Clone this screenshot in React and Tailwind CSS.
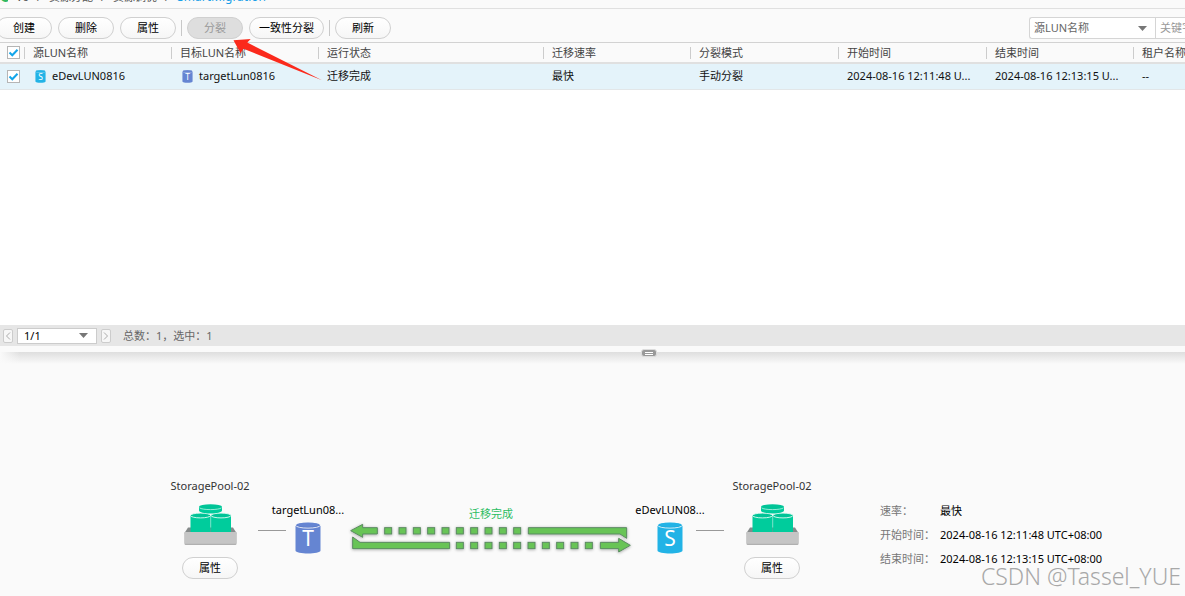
import { useState } from "react";

const columns = [
  "源LUN名称",
  "目标LUN名称",
  "运行状态",
  "迁移速率",
  "分裂模式",
  "开始时间",
  "结束时间",
  "租户名称",
];

const details = [
  { label: "速率：", value: "最快" },
  { label: "开始时间：", value: "2024-08-16 12:11:48 UTC+08:00" },
  { label: "结束时间：", value: "2024-08-16 12:13:15 UTC+08:00" },
];

const squares = [0, 43, 86, 129, 172, 215, 258, 301, 344, 387];

function PillButton({ children, disabled, wide }) {
  return (
    <button
      disabled={disabled}
      className={`h-[22px] shrink-0 rounded-full border border-[#d0d0d0] text-[11px] leading-4 ${
        wide ? "w-[75px]" : "w-14"
      } ${
        disabled
          ? "bg-[#dedede] text-[#999]"
          : "bg-gradient-to-b from-white to-[#f6f6f6] text-black"
      }`}
    >
      {children}
    </button>
  );
}

function Separator() {
  return <span className="-mx-px h-4 w-px shrink-0 bg-[#c8c8c8]" />;
}

function Check({ label, checked, onChange }) {
  return (
    <label className="relative ml-[7px] block h-[13px] w-[13px]">
      <input
        type="checkbox"
        aria-label={label}
        checked={checked}
        onChange={onChange}
        className="block h-[13px] w-[13px] appearance-none border border-[#b5b5b5] bg-white"
      />
      {checked && (
        <svg
          viewBox="0 0 13 13"
          className="pointer-events-none absolute inset-0 h-[13px] w-[13px]"
        >
          <path d="M2.5 6.5 L5.3 9.3 L10.5 3.8" fill="none" stroke="#12a5ea" strokeWidth="2" />
        </svg>
      )}
    </label>
  );
}

function Caret({ className }) {
  return (
    <svg viewBox="0 0 9 5" className={`pointer-events-none absolute h-[5px] w-[9px] ${className}`}>
      <path d="M0 0H9L4.5 5Z" fill="#777" />
    </svg>
  );
}

function LunIcon({ letter, color, top, className }) {
  return (
    <svg viewBox="0 0 26 32" className={className}>
      <path d="M0.5 4V28.5C0.5 32.5 25.5 32.5 25.5 28.5V4Z" fill={color} />
      <ellipse cx="13" cy="3.3" rx="12.3" ry="2.8" fill={top} stroke="#fff" strokeWidth="0.8" />
      <ellipse cx="13" cy="2.8" rx="11.6" ry="2.2" fill={color} />
      <text
        x="13"
        y="24"
        textAnchor="middle"
        fontSize="21"
        fontFamily="'Noto Sans', sans-serif"
        fill="#fff"
      >
        {letter}
      </text>
    </svg>
  );
}

function SourceIcon({ className }) {
  return <LunIcon letter="S" color="#22b3e6" top="#1ba6d8" className={className} />;
}

function TargetIcon({ className }) {
  return <LunIcon letter="T" color="#6585d2" top="#5878c5" className={className} />;
}

function PoolIcon() {
  return (
    <svg viewBox="0 0 56 44" className="h-11 w-14">
      <path d="M6 25.5H51L54.5 31H2.5Z" fill="#858a8a" />
      <rect x="2.5" y="30" width="52" height="13" rx="1.2" fill="#b0b0b0" />
      <rect x="2.5" y="30" width="52" height="11.8" rx="1.2" fill="#c5c5c5" />
      <path d="M8.5 14V30H28.6V14Z M29.1 14V30H49V14Z" fill="#00cc9c" />
      <ellipse cx="18.5" cy="13.5" rx="10" ry="2.4" fill="#00c497" stroke="#e2faf3" strokeWidth="0.9" />
      <ellipse cx="39" cy="13.5" rx="10" ry="2.4" fill="#00c497" stroke="#e2faf3" strokeWidth="0.9" />
      <path d="M17 5V8.5C17 12.5 40 12.5 40 8.5V5Z" fill="#00cc9c" />
      <ellipse cx="28.5" cy="4.8" rx="11.5" ry="2.5" fill="#00c497" />
      <path d="M17.5 5.8C20 8.2 37 8.2 39.5 5.8" fill="none" stroke="#b9f2e3" strokeWidth="0.8" />
    </svg>
  );
}

function StoragePool() {
  return (
    <div className="flex w-24 shrink-0 flex-col items-center">
      <span className="whitespace-nowrap leading-4 text-[#333]">StoragePool-02</span>
      <div className="mt-2 mb-[11px]">
        <PoolIcon />
      </div>
      <PillButton>属性</PillButton>
    </div>
  );
}

function Link() {
  return <span className="mt-[52px] h-px w-7 shrink-0 bg-[#999]" />;
}

function Lun({ name, children }) {
  return (
    <div className="mt-6 flex w-11 shrink-0 flex-col items-center gap-1">
      <span className="whitespace-nowrap leading-4 text-black">{name}</span>
      {children}
    </div>
  );
}

function MigrationArrows() {
  return (
    <svg viewBox="24 66 858 102" className="block h-[34px] w-[286px]">
      <defs>
        <filter id="glow" x="-5%" y="-20%" width="110%" height="140%">
          <feDropShadow dx="0" dy="2" stdDeviation="4" floodColor="#000" floodOpacity="0.35" />
        </filter>
      </defs>
      <g fill="#67c457" stroke="#5c8a62" strokeWidth="3" filter="url(#glow)">
        <path d="M32 92L68 73V83H112V102H68V112Z" />
        {squares.map((x) => (
          <rect key={x} x={134 + x} y="83" width="21" height="19" />
        ))}
        <path d="M565 83H860V115L840 102H565Z" />
        <path d="M38 111L60 127H329V146H38Z" />
        {squares.map((x) => (
          <rect key={x} x={349 + x} y="127" width="21" height="19" />
        ))}
        <path d="M781 127H836V115L871 136L836 156V146H781Z" />
      </g>
    </svg>
  );
}

export default function App() {
  const [allChecked, setAllChecked] = useState(true);
  const [rowChecked, setRowChecked] = useState(true);
  const [keyword, setKeyword] = useState("");

  return (
    <div className="relative flex min-h-screen flex-col overflow-hidden bg-[#fafafa] font-['Noto_Sans','Noto_Sans_CJK_SC',sans-serif] text-[11px] leading-4">
      {/* Breadcrumb */}
      <nav className="flex h-[9px] items-end gap-2 overflow-hidden border-b border-[#e0e0e0] pb-[3px] text-[#555]">
        <span className="h-4 w-2 shrink-0 overflow-hidden text-[#2fb860]">●</span>
        <a href="#device">V6</a>
        <span>/</span>
        <a href="#allocation">资源分配</a>
        <span>/</span>
        <a href="#tuning">资源调优</a>
        <span>/</span>
        <a href="#migration" className="text-[12px] text-[#1a9fe8]">SmartMigration</a>
      </nav>

      {/* Toolbar */}
      <div className="flex h-[34px] items-center gap-1.5 overflow-hidden border-b border-[#d2d2d2] pt-1">
        <div className="-ml-1 flex items-center gap-1.5">
          <PillButton>创建</PillButton>
          <PillButton>删除</PillButton>
          <PillButton>属性</PillButton>
          <Separator />
          <PillButton disabled>分裂</PillButton>
          <PillButton wide>一致性分裂</PillButton>
          <Separator />
          <PillButton>刷新</PillButton>
        </div>
        <div className="ml-auto flex h-[22px] w-[156px] overflow-hidden rounded-l-[3px] border border-r-0 border-[#d5d5d5] bg-white text-[#666]">
          <div className="relative w-[126px] shrink-0 border-r border-[#d5d5d5]">
            <select aria-label="搜索字段" className="h-5 w-full appearance-none pl-1 leading-5">
              <option>源LUN名称</option>
              <option>目标LUN名称</option>
            </select>
            <Caret className="top-2 right-2" />
          </div>
          <input
            type="text"
            aria-label="关键字"
            placeholder="关键字"
            value={keyword}
            onChange={(e) => setKeyword(e.target.value)}
            className="h-5 w-28 shrink-0 pl-1 placeholder:text-[#999]"
          />
        </div>
      </div>

      {/* LUN table */}
      <div className="h-[282px] overflow-hidden bg-white">
        <table className="w-full table-fixed border-collapse text-left">
          <colgroup>
            <col className="w-6" />
            <col className="w-[147px]" />
            <col className="w-[147px]" />
            <col className="w-[225px]" />
            <col className="w-[147px]" />
            <col className="w-[148px]" />
            <col className="w-[148px]" />
            <col className="w-[147px]" />
            <col />
          </colgroup>
          <thead>
            <tr className="h-5 border-b-2 border-[#e0e0e0] bg-[#fafafa] text-[#444]">
              <th className="p-0">
                <Check
                  label="全选"
                  checked={allChecked}
                  onChange={() => setAllChecked(!allChecked)}
                />
              </th>
              {columns.map((name) => (
                <th key={name} className="overflow-hidden p-0 font-normal whitespace-nowrap">
                  <div className="flex items-center gap-2">
                    <span className="h-3 w-px shrink-0 bg-[#ccc]" />
                    {name}
                  </div>
                </th>
              ))}
            </tr>
          </thead>
          <tbody>
            <tr className="h-[26px] border-b border-[#e2e6e8] bg-[#e4f3fa] whitespace-nowrap text-[#111]">
              <td className="p-0">
                <Check
                  label="eDevLUN0816"
                  checked={rowChecked}
                  onChange={() => setRowChecked(!rowChecked)}
                />
              </td>
              <td className="p-0">
                <div className="flex items-center gap-1.5 pl-[11px]">
                  <SourceIcon className="h-[13px] w-[11px]" />
                  eDevLUN0816
                </div>
              </td>
              <td className="p-0">
                <div className="flex items-center gap-1.5 pl-[11px]">
                  <TargetIcon className="h-[13px] w-[11px]" />
                  targetLun0816
                </div>
              </td>
              <td className="p-0 pl-[9px]">迁移完成</td>
              <td className="p-0 pl-[9px]">最快</td>
              <td className="p-0 pl-[9px]">手动分裂</td>
              <td className="p-0 pl-[9px]">2024-08-16 12:11:48 U...</td>
              <td className="p-0 pl-[9px]">2024-08-16 12:13:15 U...</td>
              <td className="p-0 pl-[9px]">--</td>
            </tr>
          </tbody>
        </table>
      </div>

      {/* Pager */}
      <div className="flex h-[21px] items-center gap-1 bg-[#e6e6e6] pl-[3px] text-[#666]">
        <button
          aria-label="上一页"
          className="flex h-3.5 w-2.5 items-center justify-center rounded-xs border border-[#ccc] bg-[#f7f7f7]"
        >
          <svg viewBox="0 0 6 8" className="h-2 w-1.5">
            <path d="M5 0.5L1.5 4L5 7.5" fill="none" stroke="#aaa" />
          </svg>
        </button>
        <div className="relative h-4 w-20 border border-[#ccc] bg-white text-black">
          <select aria-label="页码" className="block h-3.5 w-full appearance-none pl-1.5 leading-[14px]">
            <option>1/1</option>
          </select>
          <Caret className="top-1 right-2" />
        </div>
        <button
          aria-label="下一页"
          className="flex h-3.5 w-2.5 items-center justify-center rounded-xs border border-[#ccc] bg-[#f7f7f7]"
        >
          <svg viewBox="0 0 6 8" className="h-2 w-1.5">
            <path d="M1 0.5L4.5 4L1 7.5" fill="none" stroke="#aaa" />
          </svg>
        </button>
        <span className="ml-2">总数：1，选中：1</span>
      </div>

      {/* Splitter */}
      <div className="relative mt-1.5 h-3 bg-gradient-to-b from-[#dedede] to-[#fafafa]">
        <span className="block h-3 w-5 bg-gradient-to-r from-[#fafafa] to-transparent" />
        <button
          aria-label="收起详情"
          className="absolute -top-[3px] left-[641px] flex h-2 w-4 flex-col items-center justify-center gap-px rounded-[3px] border border-[#ddd] bg-[#999]"
        >
          <span className="h-px w-2 bg-white" />
          <span className="h-px w-2 bg-white" />
        </button>
      </div>

      {/* Migration diagram */}
      <div className="flex items-start pt-[114px] pb-4 pl-[162px]">
        <StoragePool />
        <Link />
        <Lun name="targetLun08...">
          <TargetIcon className="h-8 w-[26px]" />
        </Lun>
        <div className="mr-3.5 ml-[18px] mt-7 flex shrink-0 flex-col items-center">
          <span className="text-[#2bbd62]">迁移完成</span>
          <MigrationArrows />
        </div>
        <Lun name="eDevLUN08...">
          <SourceIcon className="h-8 w-[26px]" />
        </Lun>
        <div className="ml-1 flex shrink-0">
          <Link />
          <StoragePool />
        </div>
        <dl className="mt-[25px] ml-[60px] grid shrink-0 grid-cols-[60px_auto] gap-y-2">
          {details.map((item) => (
            <div key={item.label} className="contents">
              <dt className="whitespace-nowrap text-[#777]">{item.label}</dt>
              <dd className="whitespace-nowrap text-black">{item.value}</dd>
            </div>
          ))}
        </dl>
      </div>

      {/* Pointer over the split button */}
      <svg
        viewBox="230 36 96 48"
        className="pointer-events-none absolute top-9 left-[230px] h-12 w-24"
      >
        <path d="M233.5 40.3L250.7 39L247.3 42.5L322 80.3L243.5 48.8L240.5 53.3Z" fill="#fb2a1c" />
      </svg>

      <span className="pointer-events-none absolute right-1 bottom-1 text-[23px] leading-8 font-light text-[#a8a8a8]">
        CSDN @Tassel_YUE
      </span>
    </div>
  );
}
